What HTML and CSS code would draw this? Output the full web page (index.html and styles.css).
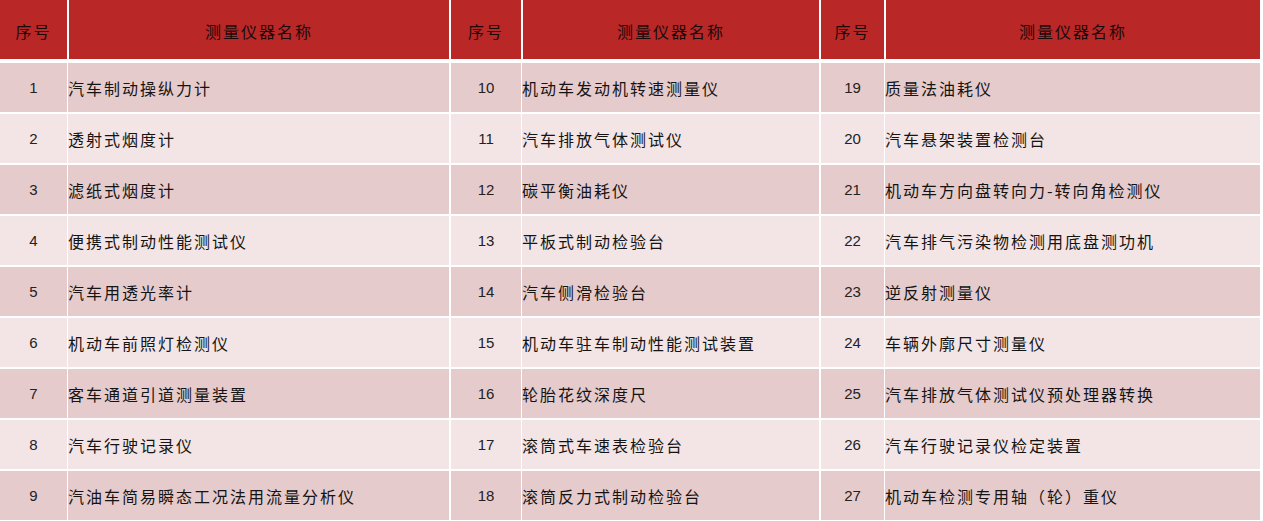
FILE: index.html
```html
<!DOCTYPE html>
<html lang="zh-CN">
<head>
<meta charset="utf-8">
<title>测量仪器名称</title>
<link rel="stylesheet" href="styles.css">
</head>
<body>
<div class="sheet">
  <div class="grid head">
    <div class="cell num">序号</div>
    <div class="cell title">测量仪器名称</div>
    <div class="cell num">序号</div>
    <div class="cell title">测量仪器名称</div>
    <div class="cell num">序号</div>
    <div class="cell title">测量仪器名称</div>
  </div>
  <div class="grid body">
    <div class="cell num dark">1</div><div class="cell name dark">汽车制动操纵力计</div><div class="cell num dark">10</div><div class="cell name dark">机动车发动机转速测量仪</div><div class="cell num dark">19</div><div class="cell name dark">质量法油耗仪</div>
    <div class="cell num light">2</div><div class="cell name light">透射式烟度计</div><div class="cell num light">11</div><div class="cell name light">汽车排放气体测试仪</div><div class="cell num light">20</div><div class="cell name light">汽车悬架装置检测台</div>
    <div class="cell num dark">3</div><div class="cell name dark">滤纸式烟度计</div><div class="cell num dark">12</div><div class="cell name dark">碳平衡油耗仪</div><div class="cell num dark">21</div><div class="cell name dark">机动车方向盘转向力-转向角检测仪</div>
    <div class="cell num light">4</div><div class="cell name light">便携式制动性能测试仪</div><div class="cell num light">13</div><div class="cell name light">平板式制动检验台</div><div class="cell num light">22</div><div class="cell name light">汽车排气污染物检测用底盘测功机</div>
    <div class="cell num dark">5</div><div class="cell name dark">汽车用透光率计</div><div class="cell num dark">14</div><div class="cell name dark">汽车侧滑检验台</div><div class="cell num dark">23</div><div class="cell name dark">逆反射测量仪</div>
    <div class="cell num light">6</div><div class="cell name light">机动车前照灯检测仪</div><div class="cell num light">15</div><div class="cell name light">机动车驻车制动性能测试装置</div><div class="cell num light">24</div><div class="cell name light">车辆外廓尺寸测量仪</div>
    <div class="cell num dark">7</div><div class="cell name dark">客车通道引道测量装置</div><div class="cell num dark">16</div><div class="cell name dark">轮胎花纹深度尺</div><div class="cell num dark">25</div><div class="cell name dark">汽车排放气体测试仪预处理器转换</div>
    <div class="cell num light">8</div><div class="cell name light">汽车行驶记录仪</div><div class="cell num light">17</div><div class="cell name light">滚筒式车速表检验台</div><div class="cell num light">26</div><div class="cell name light">汽车行驶记录仪检定装置</div>
    <div class="cell num dark">9</div><div class="cell name dark">汽油车简易瞬态工况法用流量分析仪</div><div class="cell num dark">18</div><div class="cell name dark">滚筒反力式制动检验台</div><div class="cell num dark">27</div><div class="cell name dark">机动车检测专用轴（轮）重仪</div>
  </div>
</div>
</body>
</html>
```

FILE: styles.css
```css
html, body {
  margin: 0;
  padding: 0;
  background: #ffffff;
}

.sheet {
  width: 1260px;
  display: flex;
  flex-direction: column;
  gap: 4px;
}

.grid {
  display: grid;
  grid-template-columns: 67px 380px 70px 296px 63px 374px;
  column-gap: 2px;
  row-gap: 2px;
}

.head {
  grid-template-rows: 59px;
}

.body {
  grid-template-rows: repeat(9, 49px);
}

.cell {
  display: flex;
  align-items: center;
  color: #141414;
  font-family: "Noto Sans CJK SC", "Noto Sans", sans-serif;
  font-size: 16px;
  letter-spacing: 2px;
  overflow: hidden;
  white-space: nowrap;
}

.head .cell {
  background: #b92727;
  justify-content: center;
  color: #1a0a0a;
  padding-top: 2px;
}

.num {
  justify-content: center;
}

.body .num {
  font-family: "Liberation Sans", "DejaVu Sans", sans-serif;
  font-size: 15px;
  letter-spacing: 0;
  color: #222;
}

.name {
  padding-left: 0;
  margin-left: -1px;
}

.dark {
  background: #e6cbcc;
}

.light {
  background: #f3e5e6;
}
```
